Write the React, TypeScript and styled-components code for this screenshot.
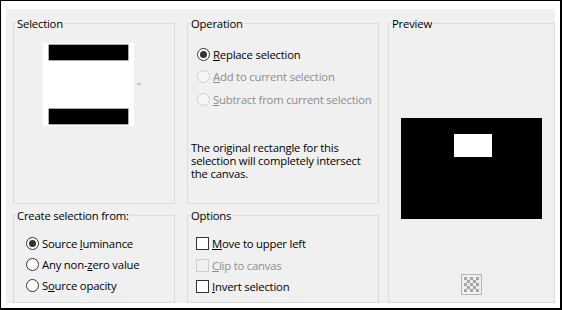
import styled, { createGlobalStyle } from "styled-components";

const GlobalStyle = createGlobalStyle`
  body {
    margin: 0;
    font-family: "Open Sans", "Noto Sans", sans-serif;
    font-size: 11.3px;
    letter-spacing: -0.2px;
    color: #000;
  }
`;

const Frame = styled.div`
  width: 562px;
  height: 310px;
  box-sizing: border-box;
  background: #fff;
  border-style: solid;
  border-color: #000;
  border-width: 1px 2px 2px 1px;
  padding: 8px 5px 5px 5px;
`;

const Panel = styled.div`
  height: 294px;
  box-sizing: border-box;
  background: #f0f0f0;
  padding: 7px 0 0 7px;
  display: grid;
  grid-template-columns: 162px 12px 192px 9px 167px;
  grid-template-rows: 188px 95px;
  row-gap: 4px;
`;

const Group = styled.fieldset<{ $col: number; $row: string }>`
  margin: 0;
  padding: 0;
  min-width: 0;
  border: 1px solid #dcdcdc;
  box-sizing: border-box;
  grid-column: ${({ $col }) => $col};
  grid-row: ${({ $row }) => $row};
`;

const Legend = styled.legend`
  margin-left: 2px;
  padding: 0 1px;
  line-height: 15px;
`;

const SelectionBody = styled.div`
  display: flex;
  align-items: center;
  padding: 12px 0 0 29px;
`;

const Thumb = styled.div`
  width: 91px;
  height: 83px;
  box-sizing: border-box;
  background: #fff;
  padding: 2px 6px;
  display: flex;
  flex-direction: column;
  justify-content: space-between;
`;

const Bar = styled.div`
  height: 15px;
  background: #000;
  box-shadow: 0 0 0 0.5px #555;
`;

const DropArrow = styled.div`
  margin-left: 2px;
  width: 0;
  height: 0;
  border-left: 3px solid transparent;
  border-right: 3px solid transparent;
  border-top: 3px solid #c8c8c8;
`;

const OptionList = styled.div<{ $top: number; $left: number }>`
  display: flex;
  flex-direction: column;
  padding: ${({ $top, $left }) => `${$top}px 0 0 ${$left}px`};
`;

const Row = styled.label<{ $h: number; $disabled?: boolean }>`
  display: flex;
  align-items: center;
  gap: 3px;
  height: ${({ $h }) => $h}px;
  color: ${({ $disabled }) => ($disabled ? "#8d8d8d" : "#000")};
  white-space: nowrap;
`;

const Radio = styled.span<{ $checked?: boolean; $disabled?: boolean }>`
  width: 13px;
  height: 13px;
  box-sizing: border-box;
  border-radius: 50%;
  border: 1px solid ${({ $disabled }) => ($disabled ? "#cfcfcf" : "#333")};
  background: ${({ $disabled }) => ($disabled ? "#f7f7f7" : "#fff")};
  display: flex;
  align-items: center;
  justify-content: center;
  flex: none;
  &::after {
    content: "";
    width: 7px;
    height: 7px;
    border-radius: 50%;
    background: #333;
    display: ${({ $checked }) => ($checked ? "block" : "none")};
  }
`;

const Check = styled.span<{ $disabled?: boolean }>`
  width: 13px;
  height: 13px;
  box-sizing: border-box;
  border: 1px solid ${({ $disabled }) => ($disabled ? "#cfcfcf" : "#333")};
  background: ${({ $disabled }) => ($disabled ? "#f0f0f0" : "#fff")};
  flex: none;
`;

const Note = styled.p`
  margin: 30px 0 0 3px;
  line-height: 13.3px;
  width: 180px;
`;

const PreviewBody = styled.div`
  display: flex;
  flex-direction: column;
  align-items: center;
  padding-top: 87px;
`;

const Canvas = styled.div`
  width: 141px;
  height: 101px;
  background: #000;
  box-sizing: border-box;
  padding: 16px 0 0 53px;
`;

const SelRect = styled.div`
  width: 38px;
  height: 23px;
  background: #fff;
`;

const CheckerButton = styled.div`
  margin-top: 55px;
  width: 21px;
  height: 21px;
  box-sizing: border-box;
  border: 1px solid #b4b4b4;
  padding: 2px;
  display: flex;
`;

const Checker = () => (
  <svg width="15" height="15" viewBox="0 0 15 15">
    <rect width="15" height="15" fill="#ececec" />
    {[0, 1, 2, 3, 4].map((r) =>
      [0, 1, 2, 3, 4].map((c) =>
        (r + c) % 2 === 0 ? (
          <rect key={`${r}-${c}`} x={c * 3} y={r * 3} width="3" height="3" fill="#a6a6a6" />
        ) : null
      )
    )}
  </svg>
);

export default function App() {
  return (
    <>
      <GlobalStyle />
      <Frame>
        <Panel>
          <Group $col={1} $row="1">
            <Legend>Selection</Legend>
            <SelectionBody>
              <Thumb>
                <Bar />
                <Bar />
              </Thumb>
              <DropArrow />
            </SelectionBody>
          </Group>
          <Group $col={3} $row="1">
            <Legend>Operation</Legend>
            <OptionList $top={12} $left={9}>
              <Row $h={22.5}>
                <Radio $checked />
                <span><u>R</u>eplace selection</span>
              </Row>
              <Row $h={22.5} $disabled>
                <Radio $disabled />
                <span><u>A</u>dd to current selection</span>
              </Row>
              <Row $h={22.5} $disabled>
                <Radio $disabled />
                <span><u>S</u>ubtract from current selection</span>
              </Row>
            </OptionList>
            <Note>
              The original rectangle for this selection will completely
              intersect the canvas.
            </Note>
          </Group>
          <Group $col={5} $row="1 / 3">
            <Legend>Preview</Legend>
            <PreviewBody>
              <Canvas>
                <SelRect />
              </Canvas>
              <CheckerButton>
                <Checker />
              </CheckerButton>
            </PreviewBody>
          </Group>
          <Group $col={1} $row="2">
            <Legend>Create selection from:</Legend>
            <OptionList $top={10} $left={12}>
              <Row $h={21}>
                <Radio $checked />
                <span>Source <u>l</u>uminance</span>
              </Row>
              <Row $h={21}>
                <Radio />
                <span>Any non-<u>z</u>ero value</span>
              </Row>
              <Row $h={21}>
                <Radio />
                <span>S<u>o</u>urce opacity</span>
              </Row>
            </OptionList>
          </Group>
          <Group $col={3} $row="2">
            <Legend>Options</Legend>
            <OptionList $top={10} $left={8}>
              <Row $h={21.5}>
                <Check />
                <span><u>M</u>ove to upper left</span>
              </Row>
              <Row $h={21.5} $disabled>
                <Check $disabled />
                <span><u>C</u>lip to canvas</span>
              </Row>
              <Row $h={21.5}>
                <Check />
                <span><u>I</u>nvert selection</span>
              </Row>
            </OptionList>
          </Group>
        </Panel>
      </Frame>
    </>
  );
}
